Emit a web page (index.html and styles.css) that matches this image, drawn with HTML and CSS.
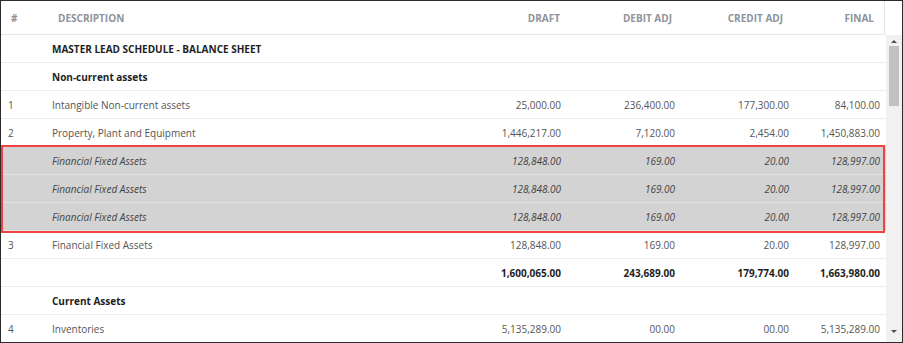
FILE: index.html
```html
<!DOCTYPE html>
<html>
<head>
<meta charset="utf-8">
<link rel="stylesheet" href="styles.css">
</head>
<body>
<div class="frame">
  <div class="head">
    <div class="hrow">
      <div class="hc c-num">#</div>
      <div class="hc c-desc">DESCRIPTION</div>
      <div class="hc r p0">DRAFT</div>
      <div class="hc r p2">DEBIT ADJ</div>
      <div class="hc r p4">CREDIT ADJ</div>
      <div class="hc r p5">FINAL</div>
    </div>
    <div class="hgutter"></div>
  </div>
  <div class="bodywrap">
    <div class="rows">
      <div class="row bold"><div class="c-num"></div><div class="c-desc">MASTER LEAD SCHEDULE - BALANCE SHEET</div><div></div><div></div><div></div><div></div></div>
      <div class="row bold"><div class="c-num"></div><div class="c-desc">Non-current assets</div><div></div><div></div><div></div><div></div></div>
      <div class="row"><div class="c-num">1</div><div class="c-desc">Intangible Non-current assets</div><div class="r">25,000.00</div><div class="r">236,400.00</div><div class="r">177,300.00</div><div class="r">84,100.00</div></div>
      <div class="row"><div class="c-num">2</div><div class="c-desc">Property, Plant and Equipment</div><div class="r">1,446,217.00</div><div class="r">7,120.00</div><div class="r">2,454.00</div><div class="r">1,450,883.00</div></div>
      <div class="hl">
        <div class="row it"><div class="c-num"></div><div class="c-desc">Financial Fixed Assets</div><div class="r">128,848.00</div><div class="r">169.00</div><div class="r">20.00</div><div class="r">128,997.00</div></div>
        <div class="row it"><div class="c-num"></div><div class="c-desc">Financial Fixed Assets</div><div class="r">128,848.00</div><div class="r">169.00</div><div class="r">20.00</div><div class="r">128,997.00</div></div>
        <div class="row it"><div class="c-num"></div><div class="c-desc">Financial Fixed Assets</div><div class="r">128,848.00</div><div class="r">169.00</div><div class="r">20.00</div><div class="r">128,997.00</div></div>
      </div>
      <div class="row"><div class="c-num">3</div><div class="c-desc">Financial Fixed Assets</div><div class="r">128,848.00</div><div class="r">169.00</div><div class="r">20.00</div><div class="r">128,997.00</div></div>
      <div class="row bold"><div class="c-num"></div><div class="c-desc"></div><div class="r">1,600,065.00</div><div class="r">243,689.00</div><div class="r">179,774.00</div><div class="r">1,663,980.00</div></div>
      <div class="row bold"><div class="c-num"></div><div class="c-desc">Current Assets</div><div></div><div></div><div></div><div></div></div>
      <div class="row"><div class="c-num">4</div><div class="c-desc">Inventories</div><div class="r">5,135,289.00</div><div class="r">00.00</div><div class="r">00.00</div><div class="r">5,135,289.00</div></div>
    </div>
    <div class="sbar">
      <div class="arrow up"></div>
      <div class="thumb"></div>
      <div class="track"></div>
      <div class="arrow down"></div>
    </div>
  </div>
</div>
</body>
</html>
```
FILE: styles.css
```css
html, body {
  margin: 0;
  padding: 0;
  background: #fff;
}
body {
  font-family: "Open Sans", "Liberation Sans", sans-serif;
  font-size: 10px;
  color: #555;
}
.frame {
  width: 901px;
  height: 341px;
  border: 1px solid #2b2b2b;
  overflow: hidden;
  display: flex;
  flex-direction: column;
}
.head {
  display: flex;
  height: 33px;
  flex: none;
}
.hrow {
  width: 884px;
  display: grid;
  grid-template-columns: 41px 1fr 120px 114px 114px 91px;
  padding-right: 5px;
  box-sizing: border-box;
  border-bottom: 1px solid #e6e6e6;
  border-right: 1px solid #e6e6e6;
  align-items: center;
  height: 34px;
}
.hc {
  font-weight: 700;
  color: #8e939b;
  font-size: 10px;
  padding-top: 1px;
}
.hrow .c-num { padding-left: 10px; }
.hrow .c-desc { padding-left: 16px; }
.hgutter { width: 16px; }
.r { text-align: right; }
.p0 { padding-right: 0; }
.p2 { padding-right: 2px; }
.p4 { padding-right: 5px; }
.p5 { padding-right: 5px; }

.bodywrap {
  display: flex;
  flex: 1;
  min-height: 0;
  margin-top: 1px;
}
.rows {
  width: 885px;
  flex: none;
}
.row {
  display: grid;
  grid-template-columns: 41px 1fr 120px 114px 114px 91px;
  padding-right: 6px;
  height: 28px;
  box-sizing: border-box;
  border-bottom: 1px solid #ececec;
  align-items: center;
}
.row .c-num { padding-left: 7px; }
.row .c-desc { padding-left: 10px; }
.row.bold { font-weight: 700; color: #1e1e1e; }
.hl {
  position: relative;
  background: #d3d3d3;
}
.hl::after {
  content: "";
  position: absolute;
  top: -2px;
  bottom: -2px;
  left: 0;
  right: 1px;
  border: 2px solid #f04242;
  pointer-events: none;
}
.row.it {
  font-style: italic;
  color: #444;
  border-bottom: 1px solid #e2e2e2;
}
.sbar {
  width: 16px;
  background: #f1f1f1;
  display: flex;
  flex-direction: column;
  align-items: center;
}
.arrow {
  width: 0;
  height: 0;
  border-left: 3px solid transparent;
  border-right: 3px solid transparent;
  flex: none;
}
.arrow.up {
  border-bottom: 3px solid #505050;
  margin-top: 5px;
}
.arrow.down {
  border-top: 3px solid #505050;
  margin-bottom: 9px;
}
.thumb {
  width: 10px;
  height: 60px;
  background: #c1c1c1;
  margin-top: 3px;
  flex: none;
}
.track { flex: 1; }
```
